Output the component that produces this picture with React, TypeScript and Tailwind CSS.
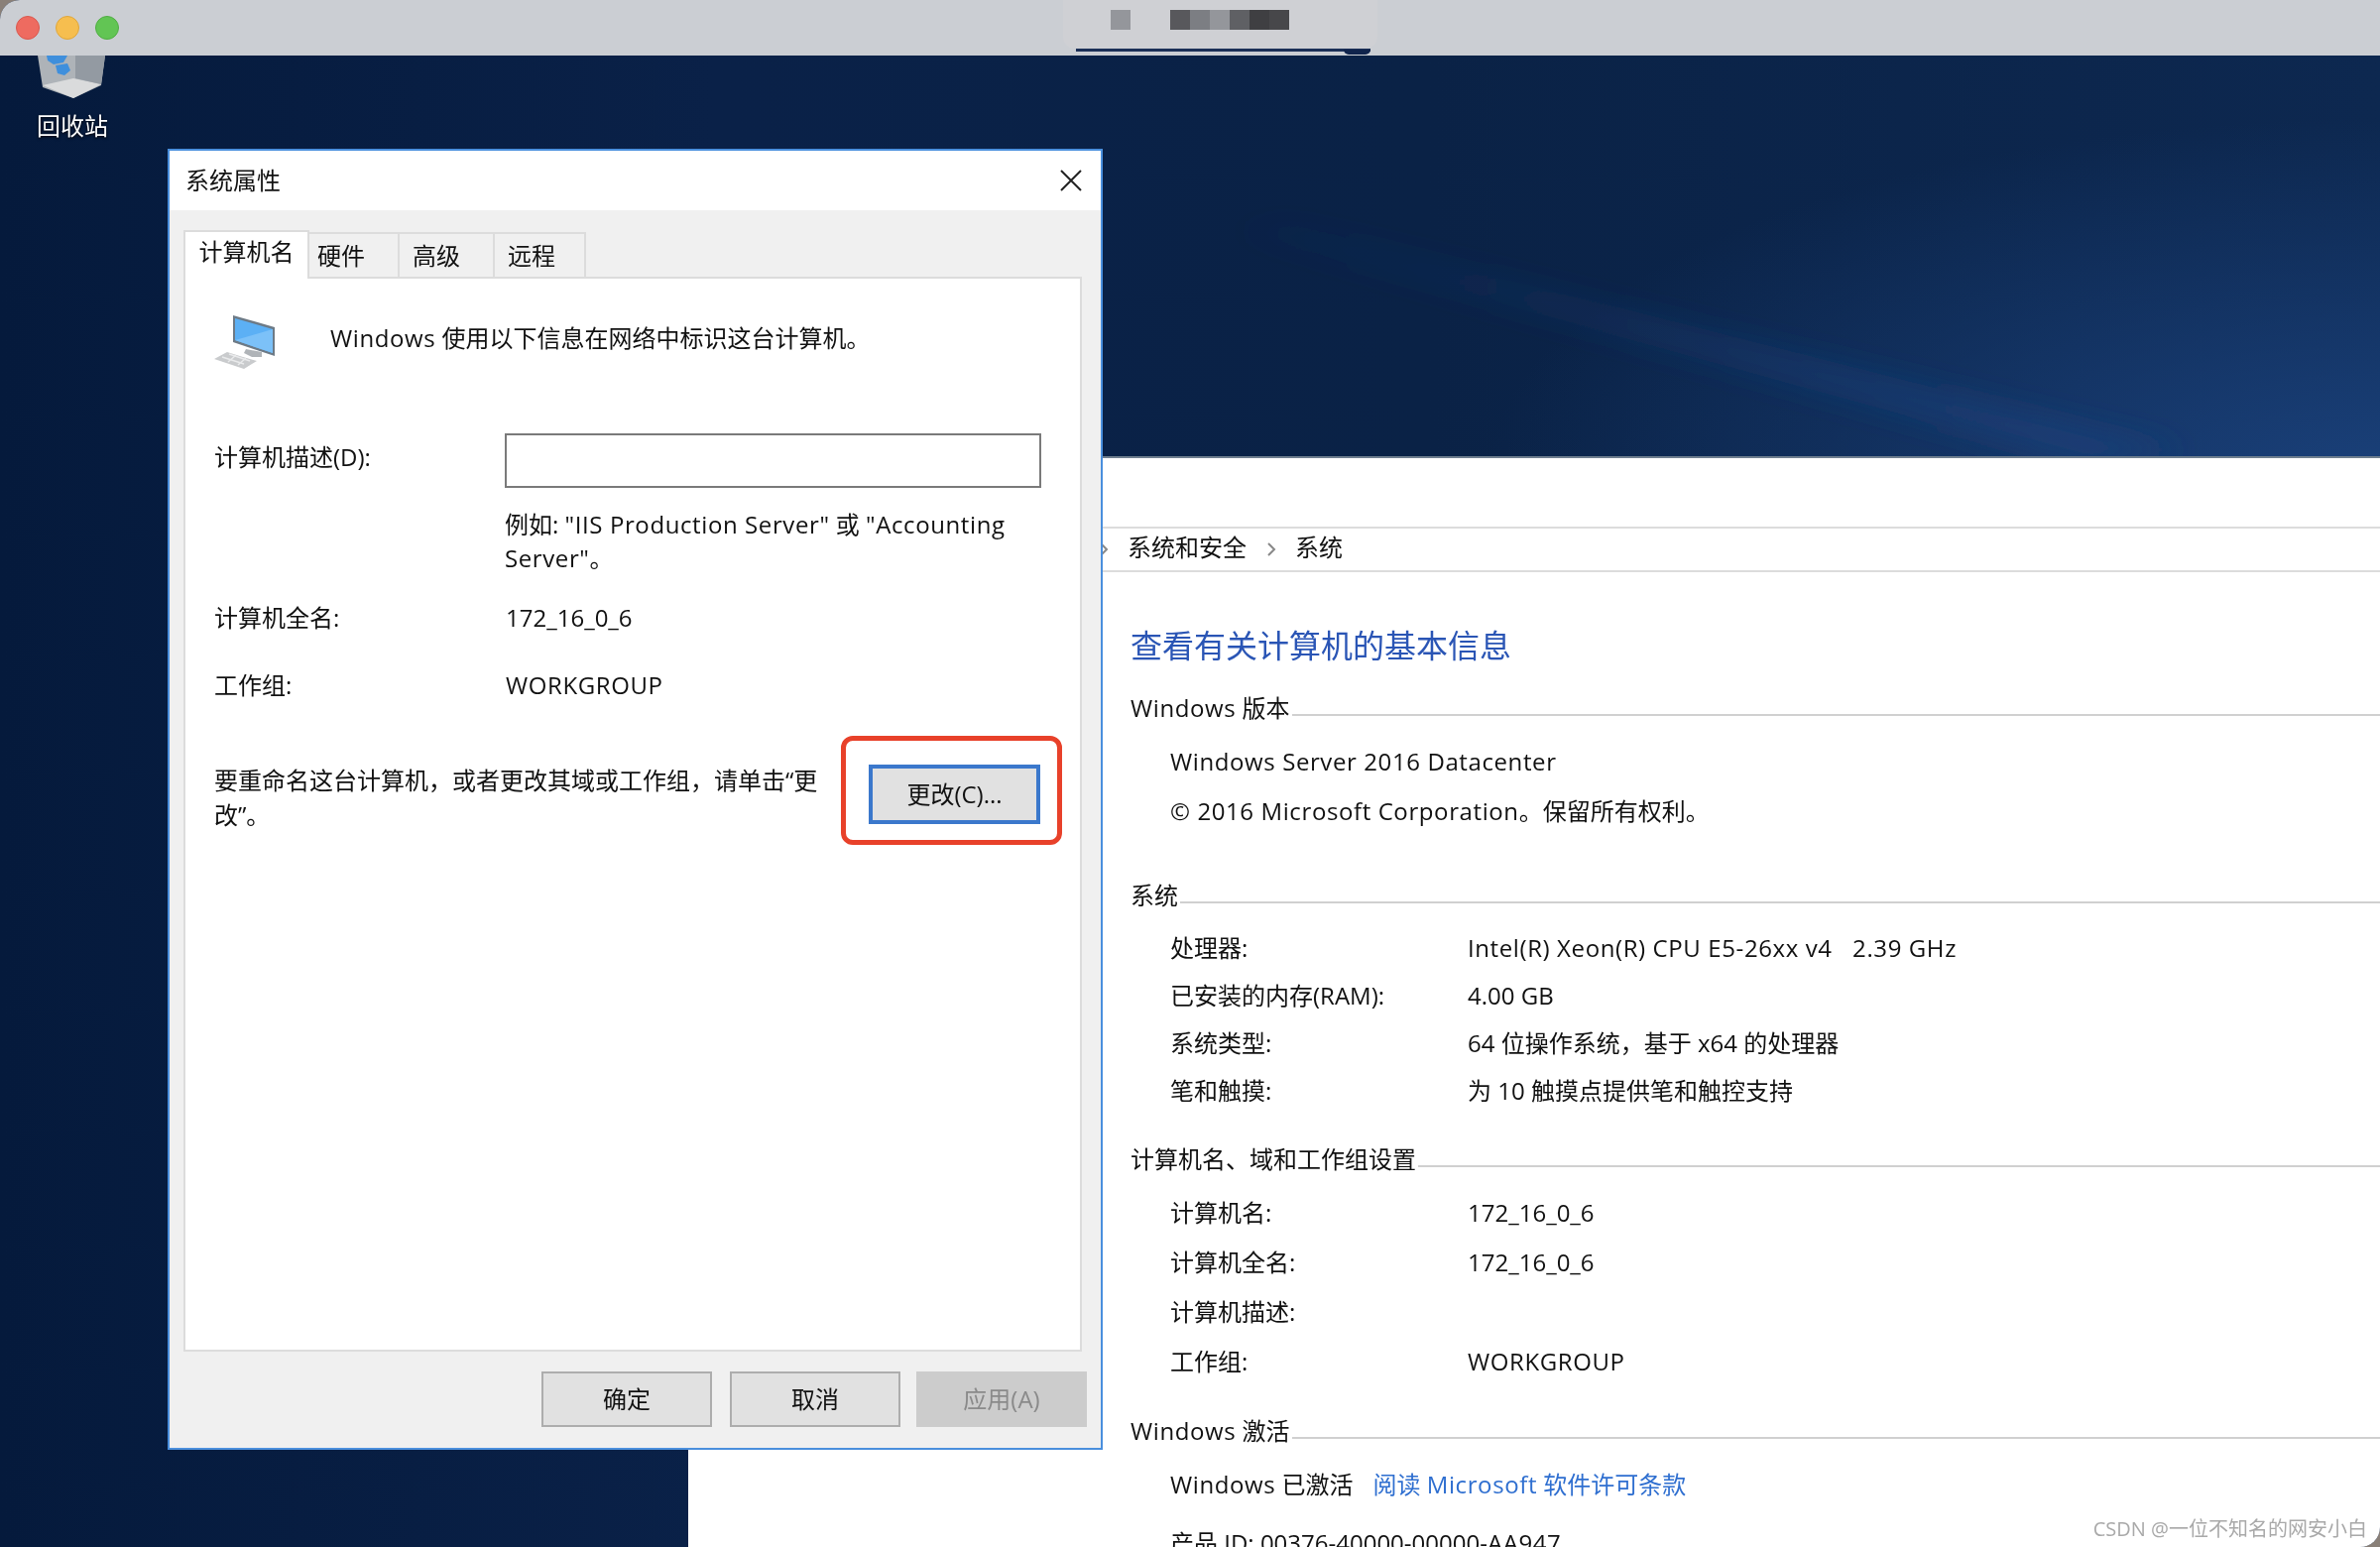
const FONT = '"Open Sans", "Noto Sans CJK SC", sans-serif';

// latin runs in the reference are a touch wider than Open Sans
function L({ children }: { children: React.ReactNode }) {
  return <span className="tracking-[0.6px]">{children}</span>;
}

function RecycleBin() {
  return (
    <svg width="68" height="44" viewBox="0 0 68 44" className="block">
      <path d="M0 0 H68 L64 30 L36 43 L5 32 Z" fill="#aeb3b8" />
      <path d="M5 30 L36 23 L64 29 L36 43 Z" fill="#dadbdc" />
      <path d="M38 0 H68 L64 29 L38 23 Z" fill="#939aa2" />
      <path d="M9 0 H30 L26 7 L16 9 L10 5 Z" fill="#3f8fdc" />
      <path d="M18 10 L30 8 L33 15 L27 20 L20 18 Z" fill="#3f8fdc" />
    </svg>
  );
}

function ComputerIcon() {
  return (
    <svg width="62" height="54" viewBox="0 0 62 54" className="block">
      <path d="M19 0 L61 12 V41 L19 27 Z" fill="#6d7a86" />
      <path d="M21 3 L59 14 V38 L21 25 Z" fill="#5cb0f5" />
      <path d="M21 25 L59 14 V38 Z" fill="#7cc1f8" />
      <path d="M32 34 L48 37 V42 L38 42 L30 38 Z" fill="#b0b4b8" />
      <path d="M13 37 L29 42 L43 46 L30 54 L0 44 Z" fill="#c9cbcd" />
      <path d="M8 42 L30 49 M15 39 L36 46 M14 47 L22 40 M24 50 L32 43" stroke="#e9eaeb" strokeWidth="1.5" />
    </svg>
  );
}

function Wallpaper() {
  return (
    <svg width="2400" height="1560" viewBox="0 0 2400 1560" className="absolute inset-0">
      <defs>
        <linearGradient id="base" x1="0" y1="0" x2="1" y2="0">
          <stop offset="0" stopColor="#051a3c" />
          <stop offset="0.3" stopColor="#0a2148" />
          <stop offset="0.6" stopColor="#0a2246" />
          <stop offset="1" stopColor="#0d2850" />
        </linearGradient>
        <radialGradient id="glow" cx="2400" cy="480" r="900" gradientUnits="userSpaceOnUse" gradientTransform="translate(0 288) scale(1 0.4)">
          <stop offset="0" stopColor="#1a4079" />
          <stop offset="1" stopColor="#1a4079" stopOpacity="0" />
        </radialGradient>
        <linearGradient id="streak" x1="1240" y1="210" x2="2150" y2="460" gradientUnits="userSpaceOnUse">
          <stop offset="0" stopColor="#1a4079" stopOpacity="0.05" />
          <stop offset="0.5" stopColor="#1a4079" stopOpacity="0.3" />
          <stop offset="1" stopColor="#1a4079" stopOpacity="0.75" />
        </linearGradient>
        <filter id="soft">
          <feGaussianBlur stdDeviation="14" />
        </filter>
      </defs>
      <rect width="2400" height="1560" fill="url(#base)" />
      <rect width="2400" height="1560" fill="url(#glow)" />
      <path d="M1240 232 L1300 225 L2200 455 L2110 470 Z" fill="url(#streak)" filter="url(#soft)" />
    </svg>
  );
}

function Tab({ label, className }: { label: string; className: string }) {
  return (
    <div className={`h-[45px] border-2 border-b-0 border-l-0 border-[#dcdcdc] flex items-center ${className}`}>
      {label}
    </div>
  );
}

function FooterButton({ label, disabled }: { label: string; disabled?: boolean }) {
  return (
    <div
      className={`w-[172px] h-[56px] border-2 flex items-center justify-center ${
        disabled ? 'bg-[#cccccc] border-[#cccccc] text-[#8a8a8a]' : 'bg-[#e1e1e1] border-[#adadad]'
      }`}
    >
      {label}
    </div>
  );
}

function Dialog() {
  return (
    <div className="absolute left-[169px] top-[150px] w-[943px] h-[1312px] bg-[#f0f0f0] border-2 border-[#4a8fdd] flex flex-col text-[24px] text-[#111]">
      <div className="h-[60px] bg-white flex items-center justify-between pl-[16px] pr-[19px] shrink-0">
        <span>系统属性</span>
        <svg width="22" height="22" viewBox="0 0 22 22">
          <path d="M1 1 L21 21 M21 1 L1 21" stroke="#222" strokeWidth="2" />
        </svg>
      </div>
      <div className="flex items-end h-[67px] pl-[14px] shrink-0">
        <div className="w-[127px] h-[49px] bg-white border-2 border-b-0 border-[#dcdcdc] flex items-center justify-center -mb-[2px] relative z-10 pb-[8px]">
          计算机名
        </div>
        <Tab label="硬件" className="w-[91px] pl-[8px]" />
        <Tab label="高级" className="w-[96px] pl-[13px]" />
        <Tab label="远程" className="w-[92px] pl-[13px]" />
      </div>
      <div className="ml-[14px] w-[906px] h-[1084px] bg-white border-2 border-[#dcdcdc] shrink-0 pl-[29px]">
        <div className="flex items-start pt-[37px] h-[156px]">
          <ComputerIcon />
          <span className="ml-[55px] mt-[6px] leading-[34px]">
            <L>Windows</L> 使用以下信息在网络中标识这台计算机。
          </span>
        </div>
        <div className="flex items-center h-[55px]">
          <span className="w-[293px] pb-[7px]">计算机描述(D):</span>
          <div className="w-[541px] h-[55px] -mt-[1px] border-2 border-[#7a7a7a] bg-white" />
        </div>
        <div className="ml-[293px] w-[541px] mt-[20px] leading-[34px]">
          例如: <L>"IIS Production Server"</L> 或 <L>"Accounting Server"</L>。
        </div>
        <div className="flex mt-[26px] leading-[34px]">
          <span className="w-[294px]">计算机全名:</span>
          <span>172_16_0_6</span>
        </div>
        <div className="flex mt-[34px] leading-[34px]">
          <span className="w-[294px]">工作组:</span>
          <span><L>WORKGROUP</L></span>
        </div>
        <div className="flex items-start mt-[61px] relative">
          <p className="w-[620px] leading-[35px]">要重命名这台计算机，或者更改其域或工作组，请单击“更改”。</p>
          <div className="ml-[40px] mt-[2px] w-[173px] h-[60px] border-4 border-[#3b78cc] bg-[#e1e1e1] flex items-center justify-center">
            更改(C)...
          </div>
          <div className="absolute left-[632px] top-[-27px] w-[223px] h-[110px] border-[5px] border-[#e8412a] rounded-[12px]" />
        </div>
      </div>
      <div className="flex justify-end gap-[18px] pr-[14px] mt-[20px] [&>*:last-child]:ml-[-2px]">
        <FooterButton label="确定" />
        <FooterButton label="取消" />
        <FooterButton label="应用(A)" disabled />
      </div>
    </div>
  );
}

function Section({ title, children }: { title: React.ReactNode; children: React.ReactNode }) {
  return (
    <div>
      <div className="flex items-end h-[34px]">
        <span className="leading-[34px]">{title}</span>
        <div className="flex-1 h-[2px] bg-[#d0d0d0] mb-[9px] ml-[2px]" />
      </div>
      {children}
    </div>
  );
}

function Row({ label, value }: { label: string; value?: React.ReactNode }) {
  return (
    <div className="flex h-[48px] items-center">
      <span className="w-[300px]">{label}</span>
      <span className="whitespace-pre">{value}</span>
    </div>
  );
}

function ControlPanel() {
  return (
    <div className="absolute left-[694px] top-[460px] right-0 bottom-0 bg-white text-[24px] text-[#111] overflow-hidden border-t-2 border-[#6f7f8f]">
      <div className="h-[69px]" />
      <div className="h-[46px] border-y-2 border-[#dcdcdc] flex items-center pl-[414px]">
        <svg width="10" height="16" viewBox="0 0 10 16" className="mr-[19px]">
          <path d="M2 2 L8 8 L2 14" stroke="#888" strokeWidth="2" fill="none" />
        </svg>
        <span className="pb-[5px]">系统和安全</span>
        <svg width="10" height="16" viewBox="0 0 10 16" className="ml-[20px] mr-[19px]">
          <path d="M2 2 L8 8 L2 14" stroke="#888" strokeWidth="2" fill="none" />
        </svg>
        <span className="pb-[5px]">系统</span>
      </div>
      <div className="pl-[446px]">
        <h1 className="text-[32px] leading-[44px] text-[#2a55b5] mt-[52px]">查看有关计算机的基本信息</h1>
        <div className="mt-[24px]">
          <Section title={<><L>Windows</L> 版本</>}>
            <div className="pl-[40px] pt-[20px]">
              <div className="leading-[34px]"><L>Windows Server 2016 Datacenter</L></div>
              <div className="leading-[34px] mt-[16px]"><L>© 2016 Microsoft Corporation</L>。保留所有权利。</div>
            </div>
          </Section>
        </div>
        <div className="mt-[51px]">
          <Section title="系统">
            <div className="pl-[40px] pt-[12px]">
              <Row label="处理器:" value={<L>{'Intel(R) Xeon(R) CPU E5-26xx v4   2.39 GHz'}</L>} />
              <Row label="已安装的内存(RAM):" value="4.00 GB" />
              <Row label="系统类型:" value="64 位操作系统，基于 x64 的处理器" />
              <Row label="笔和触摸:" value="为 10 触摸点提供笔和触控支持" />
            </div>
          </Section>
        </div>
        <div className="mt-[28px]">
          <Section title="计算机名、域和工作组设置">
            <div className="pl-[40px] pt-[12px] [&>div]:h-[50px]">
              <Row label="计算机名:" value="172_16_0_6" />
              <Row label="计算机全名:" value="172_16_0_6" />
              <Row label="计算机描述:" />
              <Row label="工作组:" value={<L>WORKGROUP</L>} />
            </div>
          </Section>
        </div>
        <div className="mt-[28px]">
          <Section title={<><L>Windows</L> 激活</>}>
            <div className="pl-[40px] pt-[20px]">
              <div className="leading-[34px]">
                <L>Windows</L> 已激活
                <span className="ml-[20px] text-[#2f6fd0]">阅读 <L>Microsoft</L> 软件许可条款</span>
              </div>
              <div className="leading-[34px] mt-[25px]">产品 ID: 00376-40000-00000-<L>AA947</L></div>
            </div>
          </Section>
        </div>
      </div>
    </div>
  );
}

export default function App() {
  return (
    <div
      className="relative w-[2400px] h-[1560px] overflow-hidden bg-[#8a8078] blur-[0.4px]"
      style={{ fontFamily: FONT }}
    >
      <div className="absolute inset-0 rounded-tl-[20px] rounded-br-[20px] overflow-hidden">
        <Wallpaper />
        <div className="h-[56px] bg-[#cbced3] flex items-center pl-[16px] gap-[16px] relative z-20">
          <span className="w-[24px] h-[24px] rounded-full bg-[#ee6b60] border border-[#d9584e]" />
          <span className="w-[24px] h-[24px] rounded-full bg-[#f6be4f] border border-[#dfa63a]" />
          <span className="w-[24px] h-[24px] rounded-full bg-[#62c554] border border-[#50ad43]" />
          <div className="absolute left-[1085px] top-[49px] w-[297px] h-[3px] bg-[#1b2f57]" />
          <div className="absolute left-[1355px] top-[50px] w-[27px] h-[5px] rounded-b-full bg-[#10244c]" />
          <div className="absolute left-[1072px] top-0 w-[317px] h-[49px] rounded-b-[12px] bg-[#cfd0d4]">
            <div className="absolute left-[48px] top-[10px] w-[20px] h-[20px] bg-[#94969b]" />
            <div className="absolute left-[108px] top-[10px] w-[120px] h-[20px] flex [&>i]:flex-1">
              <i className="bg-[#58585c]" />
              <i className="bg-[#7c7e83]" />
              <i className="bg-[#94969b]" />
              <i className="bg-[#5f6064]" />
              <i className="bg-[#3f3f42]" />
              <i className="bg-[#47474a]" />
            </div>
          </div>
        </div>
        <div className="absolute left-[38px] top-[56px]">
          <RecycleBin />
        </div>
        <div className="absolute left-[37px] top-[112px] text-[24px] leading-[30px] text-white [text-shadow:0_1px_3px_#000]">
          回收站
        </div>
        <ControlPanel />
        <Dialog />
        <div className="absolute right-[13px] bottom-[6px] text-[20px] leading-[24px] text-[#a9a9a9]">
          CSDN @一位不知名的网安小白
        </div>
      </div>
    </div>
  );
}
